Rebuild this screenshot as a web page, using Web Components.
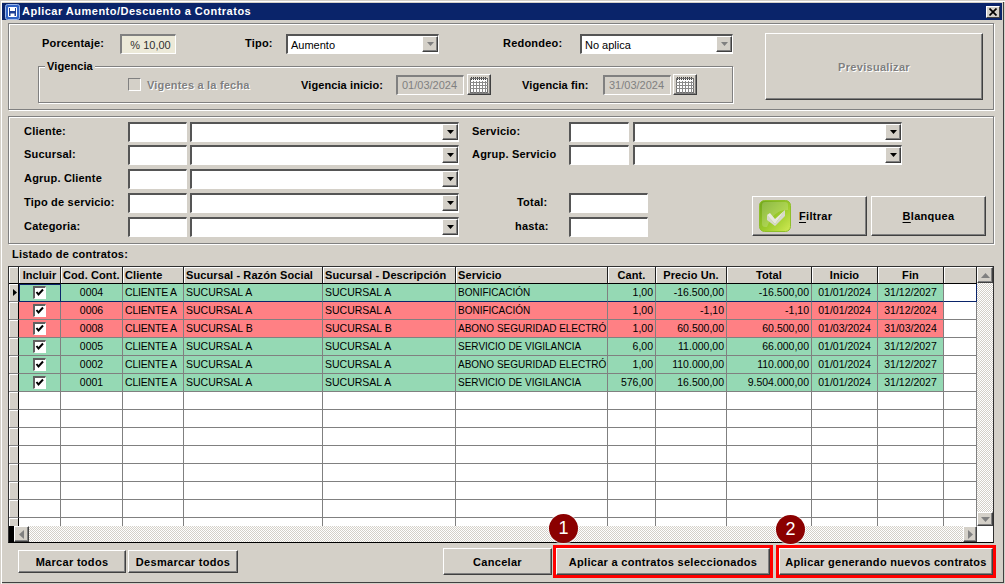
<!DOCTYPE html>
<html lang="es">
<head>
<meta charset="utf-8">
<title>Aplicar Aumento/Descuento a Contratos</title>
<style>
  html, body { margin: 0; background: #d4d0c8; }
</style>
</head>
<body>
<ui-window>
  <span slot="title">Aplicar Aumento/Descuento a Contratos</span>
  <percent-panel></percent-panel>
  <filter-panel></filter-panel>
  <contract-grid></contract-grid>
  <action-bar></action-bar>
</ui-window>

<script>
const CALENDAR = `<svg width="18" height="17" viewBox="0 0 18 17">
  <rect x="0.5" y="2.5" width="17" height="14" fill="#fff" stroke="#707070"/>
  <path d="M1 1.5h16M1 3.5h16" stroke="#404040" stroke-dasharray="1 1"/>
  <path d="M0 6.5h18M0 9.5h18M0 12.5h18M3.5 5v12M6.5 5v12M9.5 5v12M12.5 5v12M15.5 5v12" stroke="#8a8a8a"/>
</svg>`;

class UIElement extends HTMLElement {
  constructor() {
    super();

    const template = document.createElement( 'template' );
    template.innerHTML = `<style>${this.constructor.css}</style>${this.markup()}`;

    // Root
    this.attachShadow( {mode: 'open'} );
    this.shadowRoot.appendChild( template.content.cloneNode( true ) );
  }

  markup() {
    return '<slot></slot>';
  }
}

class UIWindow extends UIElement {
  static css = `
    :host {
      box-sizing: border-box;
      display: flex;
      flex-direction: column;
      width: 1005px;
      height: 584px;
      padding: 3px 3px 2px 2px;
      overflow: hidden;
      background: #d4d0c8;
      color: #000;
      font: 11px "Liberation Sans", Arial, sans-serif;
      box-shadow: inset 1px 1px 0 #d4d0c8, inset 2px 2px 0 #fff, inset -1px -1px 0 #d4d0c8, inset -2px -2px 0 #404040;
    }
    header {
      display: flex;
      align-items: center;
      flex: none;
      height: 17px;
      padding: 0 2px 0 3px;
      background: #0a246a;
      color: #fff;
      font-weight: 700;
      letter-spacing: .49px;
    }
    header svg { flex: none; }
    header span { flex: 1; padding: 0 0 2px 2px; white-space: nowrap; }
    .close {
      display: flex;
      align-items: center;
      justify-content: center;
      width: 14px;
      height: 12px;
      background: #d4d0c8;
      border: solid;
      border-width: 1px;
      border-color: #fff #404040 #404040 #fff;
      box-sizing: border-box;
    }
    main {
      display: flex;
      flex-direction: column;
      padding: 3px 8px 0 6px;
    }
  `;

  markup() {
    return `
      <header>
        <svg width="15" height="16" viewBox="0 0 15 16">
          <rect x=".5" y=".5" width="14" height="15" rx="2" fill="#2f62c4" stroke="#9db7e8"/>
          <path d="M3.5 3.5h8v9h-8z" fill="#1c3f95" stroke="#fff"/>
          <path d="M5 4h5v3H5zM5.500 9.500h4v3h-4z" fill="#fff"/>
        </svg>
        <span><slot name="title"></slot></span>
        <div class="close">
          <svg width="8" height="8" viewBox="0 0 8 8"><path d="M.5.5l7 7M7.500.5l-7 7" stroke="#000" stroke-width="1.700"/></svg>
        </div>
      </header>
      <main><slot></slot></main>
    `;
  }
}

class UILabel extends UIElement {
  static css = `
    :host {
      display: block;
      font-weight: 700;
      letter-spacing: .2px;
      line-height: 18px;
      white-space: nowrap;
    }
    :host( [disabled] ) {
      color: #808080;
      text-shadow: 1px 1px 0 #fff;
    }
  `;
}

class UIInput extends UIElement {
  static css = `
    :host {
      box-sizing: border-box;
      display: flex;
      align-items: center;
      height: 20px;
      border: solid;
      border-width: 2px 1px 1px 2px;
      border-color: #555 #fff #fff #555;
      background: #fff;
      white-space: nowrap;
    }
    :host( [disabled] ) {
      background: #d4d0c8;
      color: #808080;
      border-color: #808080 #fff #fff #808080;
      padding-left: 4px;
    }
    :host( [readonly] ) {
      background: #ece9d8;
      color: #303030;
      border-color: #808080 #fff #fff #808080;
      justify-content: center;
      padding-left: 4px;
    }
  `;
}

class UICombo extends UIElement {
  static css = `
    :host {
      box-sizing: border-box;
      display: flex;
      align-items: center;
      height: 20px;
      border: solid;
      border-width: 2px 1px 1px 2px;
      border-color: #555 #fff #fff #555;
      background: #fff;
    }
    span { flex: 1; padding-left: 3px; white-space: nowrap; }
    .button {
      box-sizing: border-box;
      display: flex;
      align-items: center;
      justify-content: center;
      flex: none;
      width: 16px;
      height: 16px;
      margin: 0 0 1px;
      background: #d4d0c8;
      border: solid;
      border-width: 1px;
      border-color: #fff #404040 #404040 #fff;
      box-shadow: inset -1px -1px 0 #808080;
    }
    path { fill: #000; }
    :host( [muted] ) path { fill: #808080; }
  `;

  markup() {
    return `
      <span><slot></slot></span>
      <div class="button"><svg width="7" height="4" viewBox="0 0 7 4"><path d="M0 0h7L3.500 4z"/></svg></div>
    `;
  }
}

class UIButton extends UIElement {
  static css = `
    :host {
      box-sizing: border-box;
      display: flex;
      align-items: center;
      justify-content: center;
      background: #d4d0c8;
      border: solid;
      border-width: 1px;
      border-color: #fff #404040 #404040 #fff;
      box-shadow: inset -1px -1px 0 #808080;
      font-weight: 700;
      letter-spacing: .3px;
      white-space: nowrap;
    }
    :host( [disabled] ) {
      color: #808080;
      text-shadow: 1px 1px 0 #fff;
    }
  `;
}

class UICheck extends UIElement {
  static css = `
    :host {
      box-sizing: border-box;
      display: block;
      width: 13px;
      height: 13px;
      border: solid;
      border-width: 2px 1px 1px 2px;
      border-color: #606060 #fff #fff #606060;
      background: #fff;
    }
    :host( [disabled] ) {
      background: #d4d0c8;
      border-width: 1px;
      border-color: #808080 #fff #fff #808080;
    }
    svg { display: block; }
  `;

  markup() {
    return this.hasAttribute( 'checked' )
      ? `<svg width="10" height="10" viewBox="0 0 10 10"><path d="M1.500 4l2 2.500L8 1.500" fill="none" stroke="#000" stroke-width="2"/></svg>`
      : '';
  }
}

class UIBadge extends UIElement {
  static css = `
    :host {
      display: flex;
      align-items: center;
      justify-content: center;
      position: absolute;
      width: 29px;
      height: 29px;
      border-radius: 50%;
      background: #8b0000;
      box-shadow: 0 0 0 1px rgba( 255, 255, 255, .55 );
      color: #fff;
      font-size: 18px;
    }
  `;
}

class PercentPanel extends UIElement {
  static css = `
    :host {
      box-sizing: border-box;
      display: flex;
      height: 87px;
      padding: 10px 0 0 29px;
      border: 1px solid #808080;
      box-shadow: inset 1px 1px 0 #fff, 1px 1px 0 #fff;
    }
    .left { width: 695px; }
    .row { display: flex; align-items: center; height: 20px; padding-left: 4px; }
    .row ui-label { margin-bottom: 2px; }
    .pct { width: 56px; margin-left: 20px; }
    .tipo { width: 41px; margin-left: 69px; }
    .combo { width: 153px; }
    .redondeo { width: 77px; margin-left: 64px; }
    .group {
      box-sizing: border-box;
      display: flex;
      align-items: center;
      position: relative;
      height: 37px;
      margin-top: 12px;
      padding: 8px 0 8px 89px;
      border: 1px solid #808080;
      box-shadow: inset 1px 1px 0 #fff, 1px 1px 0 #fff;
    }
    .legend {
      position: absolute;
      top: -10px;
      left: 6px;
      padding: 0 2px;
      background: #d4d0c8;
      letter-spacing: .1px;
    }
    .vigentes { display: flex; align-items: center; gap: 6px; width: 173px; }
    .inicio { width: 95px; letter-spacing: .1px; }
    .fin { width: 81px; margin-left: 31px; letter-spacing: .1px; }
    .date { width: 68px; }
    .cal { width: 24px; height: 21px; margin-left: 3px; }
    .preview { width: 218px; height: 67px; margin: -1px 0 0 32px; }
  `;

  markup() {
    return `
      <div class="left">
        <div class="row">
          <ui-label style="width:58px">Porcentaje:</ui-label>
          <ui-input class="pct" readonly>% 10,00</ui-input>
          <ui-label class="tipo">Tipo:</ui-label>
          <ui-combo class="combo" muted>Aumento</ui-combo>
          <ui-label class="redondeo">Redondeo:</ui-label>
          <ui-combo class="combo" muted>No aplica</ui-combo>
        </div>
        <div class="group">
          <ui-label class="legend">Vigencia</ui-label>
          <div class="vigentes">
            <ui-check disabled></ui-check>
            <ui-label disabled>Vigentes a la fecha</ui-label>
          </div>
          <ui-label class="inicio">Vigencia inicio:</ui-label>
          <ui-input class="date" disabled>01/03/2024</ui-input>
          <ui-button class="cal">${CALENDAR}</ui-button>
          <ui-label class="fin">Vigencia fin:</ui-label>
          <ui-input class="date" disabled>31/03/2024</ui-input>
          <ui-button class="cal" style="margin-left:2px">${CALENDAR}</ui-button>
        </div>
      </div>
      <ui-button class="preview" disabled>Previsualizar</ui-button>
    `;
  }
}

class FilterPanel extends UIElement {
  static css = `
    :host {
      box-sizing: border-box;
      display: flex;
      gap: 13px;
      height: 128px;
      margin-top: 6px;
      padding: 5px 0 0 15px;
      border: 1px solid #808080;
      box-shadow: inset 1px 1px 0 #fff, 1px 1px 0 #fff;
    }
    .fields {
      display: grid;
      grid-template-columns: 101px 59px 269px;
      grid-template-rows: 23px 24px 24px 24px 20px;
      column-gap: 3px;
      align-items: start;
      align-content: start;
    }
    .fields ui-label { line-height: 19px; }
    .right { display: flex; flex-direction: column; }
    .pair {
      display: grid;
      grid-template-columns: 93px 60px 269px;
      column-gap: 4px;
      align-items: center;
    }
    .pair ui-label, .totals ui-label { margin-bottom: 2px; }
    .pair + .pair { margin-top: 3px; }
    .bottom { display: flex; margin-top: 28px; }
    .totals {
      display: grid;
      grid-template-columns: 97px 79px;
      grid-template-rows: 20px 20px;
      row-gap: 4px;
      align-items: center;
    }
    .buttons { display: flex; gap: 4px; margin: 3px 0 0 104px; }
    .buttons ui-button { width: 115px; height: 40px; }
    .filtrar { justify-content: flex-start; }
    .filtrar > span { display: flex; align-items: center; gap: 8px; padding-left: 6px; }
    u { text-decoration-thickness: 1px; text-underline-offset: 2px; }
  `;

  markup() {
    const rows = ['Cliente:', 'Sucursal:', 'Agrup. Cliente', 'Tipo de servicio:', 'Categoria:'];
    const left = rows.map( ( label ) => `
      <ui-label>${label}</ui-label>
      <ui-input></ui-input>
      <ui-combo></ui-combo>
    ` ).join( '' );

    return `
      <div class="fields">${left}</div>
      <div class="right">
        <div class="pair">
          <ui-label>Servicio:</ui-label>
          <ui-input></ui-input>
          <ui-combo></ui-combo>
        </div>
        <div class="pair">
          <ui-label>Agrup. Servicio</ui-label>
          <ui-input></ui-input>
          <ui-combo></ui-combo>
        </div>
        <div class="bottom">
          <div class="totals">
            <ui-label style="padding-left:45px">Total:</ui-label>
            <ui-input></ui-input>
            <ui-label style="padding-left:43px">hasta:</ui-label>
            <ui-input></ui-input>
          </div>
          <div class="buttons">
            <ui-button class="filtrar">
              <span>
                <svg width="32" height="32" viewBox="0 0 32 32">
                  <defs>
                    <linearGradient id="g" x1="0" y1="0" x2="1" y2="1">
                      <stop offset="0" stop-color="#6fa51a"/>
                      <stop offset=".55" stop-color="#9ccb2c"/>
                      <stop offset="1" stop-color="#d2ea55"/>
                    </linearGradient>
                  </defs>
                  <rect x=".5" y=".5" width="31" height="31" rx="5" fill="url(#g)" stroke="#8fbf2a"/>
                  <path d="M3 5q0-3 3-3h20q3 0 3 3v5Q15 9 8 27H6q-3 0-3-3z" fill="#fff" opacity=".18"/>
                  <path d="M8 15l8 9L26 10v6L16 26 8 20z" fill="#d8d8cc"/>
                  <path d="M8 15l3-2 5 6 10-9-10 14z" fill="#e8e8e0"/>
                </svg>
                <span><u>F</u>iltrar</span>
              </span>
            </ui-button>
            <ui-button><span><u>B</u>lanquea</span></ui-button>
          </div>
        </div>
      </div>
    `;
  }
}

class ContractGrid extends UIElement {
  static css = `
    :host { display: block; }
    .title { height: 22px; padding-left: 4px; }
    .title ui-label { line-height: 20px; }
    .frame {
      box-sizing: border-box;
      display: grid;
      grid-template-columns: 968px 16px;
      grid-template-rows: 259px 16px;
      width: 986px;
      height: 277px;
      border: 1px solid #303030;
      border-bottom-color: #000;
      background: #fff;
    }
    .table {
      display: grid;
      grid-template-columns: 10px 42px 62px 61px 139px 133px 152px 48px 71px 85px 66px 66px 33px;
      grid-template-rows: 17px;
      grid-auto-rows: 18px;
      overflow: hidden;
      font-size: 10.500px;
    }
    .table > div {
      box-sizing: border-box;
      display: flex;
      align-items: center;
      min-width: 0;
      overflow: hidden;
      padding: 0 2px 1px 2px;
      border-right: 1px solid #808080;
      border-bottom: 1px solid #808080;
      white-space: nowrap;
    }
    .table > .head {
      padding-bottom: 0;
      background: #d4d0c8;
      border-right-color: #202020;
      border-bottom-color: #000;
      box-shadow: inset 1px 1px 0 #fff;
      font-size: 11px;
      font-weight: 700;
      letter-spacing: .1px;
    }
    .table > .stub {
      background: #d4d0c8;
      border-right-color: #000;
      border-bottom-color: #808080;
      box-shadow: inset 1px 1px 0 #fff;
      padding: 0;
    }
    .c { justify-content: center; }
    .r { justify-content: flex-end; }
    .client { letter-spacing: -.2px; }
    .service { font-size: 10px; }
    .table > .ok { background: #95d9b4; }
    .table > .bad { background: #ff8084; }
    .table > .cur { border-bottom-color: #0a246a; }
    .table > .focus {
      border-right-color: #0a246a;
      box-shadow: inset 1px 1px 0 #0a246a;
    }
    .table > .end { border-right-color: #0a246a; }
    .track {
      background: repeating-conic-gradient( #d4d0c8 0 25%, #fff 0 50% ) 0 0 / 2px 2px;
    }
    .arrow {
      box-sizing: border-box;
      display: flex;
      align-items: center;
      justify-content: center;
      flex: none;
      background: #d4d0c8;
      border: solid;
      border-width: 1px;
      border-color: #fff #404040 #404040 #fff;
      box-shadow: inset -1px -1px 0 #808080;
    }
    .arrow path { fill: #808080; }
    .vbar { display: flex; flex-direction: column; }
    .vbar .track { flex: 1; }
    .vbar .arrow { height: 16px; }
    .vbar .arrow.down { height: 14px; }
    .hbar { display: flex; }
    .hbar .corner { flex: none; width: 5px; background: #000; }
    .hbar .arrow { width: 15px; }
    .hbar .track { flex: 1; }
  `;

  markup() {
    const columns = [
      ['Incluir', 'c'], ['Cod. Cont.', ''], ['Cliente', ''], ['Sucursal - Razón Social', ''],
      ['Sucursal - Descripción', ''], ['Servicio', ''], ['Cant.', 'c'], ['Precio Un.', 'c'],
      ['Total', 'c'], ['Inicio', 'c'], ['Fin', 'c'], ['', '']
    ];
    const rows = [
      ['ok', '0004', 'SUCURSAL A', 'SUCURSAL A', 'BONIFICACIÓN', '1,00', '-16.500,00', '-16.500,00', '01/01/2024', '31/12/2027'],
      ['bad', '0006', 'SUCURSAL A', 'SUCURSAL A', 'BONIFICACIÓN', '1,00', '-1,10', '-1,10', '01/01/2024', '31/12/2024'],
      ['bad', '0008', 'SUCURSAL B', 'SUCURSAL B', 'ABONO SEGURIDAD ELECTRÓ', '1,00', '60.500,00', '60.500,00', '01/03/2024', '31/03/2024'],
      ['ok', '0005', 'SUCURSAL A', 'SUCURSAL A', 'SERVICIO DE VIGILANCIA', '6,00', '11.000,00', '66.000,00', '01/01/2024', '31/12/2027'],
      ['ok', '0002', 'SUCURSAL A', 'SUCURSAL A', 'ABONO SEGURIDAD ELECTRÓ', '1,00', '110.000,00', '110.000,00', '01/01/2024', '31/12/2027'],
      ['ok', '0001', 'SUCURSAL A', 'SUCURSAL A', 'SERVICIO DE VIGILANCIA', '576,00', '16.500,00', '9.504.000,00', '01/01/2024', '31/12/2027']
    ];

    const head = '<div class="head"></div>' + columns.map( ( [text, align] ) =>
      `<div class="head ${align}">${text}</div>`
    ).join( '' );

    const body = rows.map( ( [tone, code, razon, desc, service, qty, price, total, from, to], index ) => {
      const cur = index === 0 ? 'cur' : '';
      const cell = ( text, align = '' ) => `<div class="${tone} ${cur} ${align}">${text}</div>`;

      return `
        <div class="stub">${index === 0 ? '<svg width="9" height="9" viewBox="0 0 9 9"><path d="M4 1l4 3.500L4 8z"/></svg>' : ''}</div>
        <div class="${tone} ${cur} c ${index === 0 ? 'focus' : ''}"><ui-check checked></ui-check></div>
        ${cell( code, 'c' )}
        ${cell( 'CLIENTE A', 'client' )}
        ${cell( razon )}
        ${cell( desc )}
        ${cell( service, 'service' )}
        ${cell( qty, 'r' )}
        ${cell( price, 'r' )}
        ${cell( total, 'r' )}
        ${cell( from, 'c' )}
        ${cell( to, 'c' )}
        <div class="${cur} ${index === 0 ? 'end' : ''}"></div>
      `;
    } ).join( '' );

    const blank = '<div class="stub"></div>' + '<div></div>'.repeat( 12 );

    return `
      <div class="title"><ui-label>Listado de contratos:</ui-label></div>
      <div class="frame">
        <div class="table">${head}${body}${blank.repeat( 8 )}</div>
        <div class="vbar">
          <div class="arrow"><svg width="9" height="5" viewBox="0 0 9 5"><path d="M4.500 0L9 5H0z"/></svg></div>
          <div class="track"></div>
          <div class="arrow down"><svg width="9" height="5" viewBox="0 0 9 5"><path d="M0 0h9L4.500 5z"/></svg></div>
        </div>
        <div class="hbar">
          <div class="corner"></div>
          <div class="arrow"><svg width="5" height="9" viewBox="0 0 5 9"><path d="M5 0v9L0 4.500z"/></svg></div>
          <div class="track"></div>
          <div class="arrow" style="width:14px"><svg width="5" height="9" viewBox="0 0 5 9"><path d="M0 0v9l5-4.500z"/></svg></div>
        </div>
        <div></div>
      </div>
    `;
  }
}

class ActionBar extends UIElement {
  static css = `
    :host {
      display: flex;
      align-items: center;
      height: 33px;
      margin-top: 2px;
      padding-left: 10px;
    }
    ui-button { flex: none; }
    .small { height: 23px; }
    .marcar { width: 108px; }
    .desmarcar { width: 110px; margin-left: 2px; }
    .cancelar { width: 109px; height: 27px; margin-left: 205px; }
    .mark {
      box-sizing: border-box;
      display: flex;
      position: relative;
      flex: none;
      width: 220px;
      height: 33px;
      margin-left: 1px;
      border: 3px solid #f00;
    }
    .mark + .mark { margin-left: 3px; }
    .mark ui-button { flex: 1; }
    .one { left: -7px; top: -34px; }
    .two { left: -3px; top: -33px; }
  `;

  markup() {
    return `
      <ui-button class="small marcar">Marcar todos</ui-button>
      <ui-button class="small desmarcar">Desmarcar todos</ui-button>
      <ui-button class="cancelar">Cancelar</ui-button>
      <div class="mark">
        <ui-button>Aplicar a contratos seleccionados</ui-button>
        <ui-badge class="one">1</ui-badge>
      </div>
      <div class="mark">
        <ui-button>Aplicar generando nuevos contratos</ui-button>
        <ui-badge class="two">2</ui-badge>
      </div>
    `;
  }
}

window.customElements.define( 'ui-label', UILabel );
window.customElements.define( 'ui-input', UIInput );
window.customElements.define( 'ui-combo', UICombo );
window.customElements.define( 'ui-button', UIButton );
window.customElements.define( 'ui-check', UICheck );
window.customElements.define( 'ui-badge', UIBadge );
window.customElements.define( 'percent-panel', PercentPanel );
window.customElements.define( 'filter-panel', FilterPanel );
window.customElements.define( 'contract-grid', ContractGrid );
window.customElements.define( 'action-bar', ActionBar );
window.customElements.define( 'ui-window', UIWindow );
</script>
</body>
</html>
